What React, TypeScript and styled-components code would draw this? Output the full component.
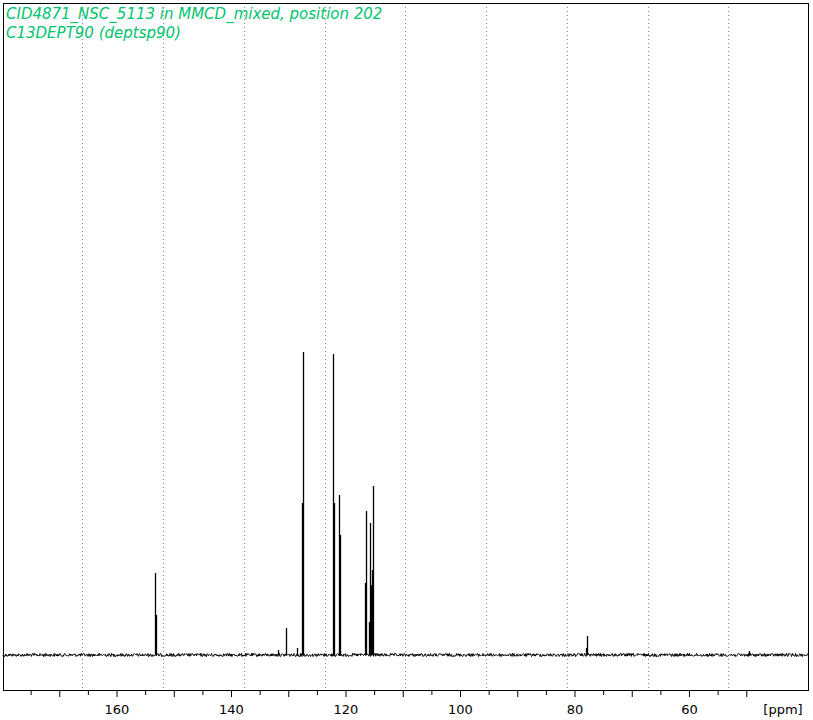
import React from 'react';
import styled, { createGlobalStyle } from 'styled-components';

const Global = createGlobalStyle`
  html, body { margin: 0; background: #fff; }
`;

const W = 813;
const H = 720;
const LEFT = 3;
const RIGHT = 808;
const TOP = 3;
const BOTTOM = 690;
const BASE = 655;

const ppmX = (p: number) => 117 + (160 - p) * 5.725;

const peaks: [number, number][] = [
  [155, 573], [156, 615], [278, 650], [286, 628], [297, 648], [302, 503], [303, 352],
  [333, 354], [334, 503], [339, 495], [340, 535], [365, 583], [366, 511],
  [369, 622], [370, 523], [371, 585], [372, 570], [373, 486], [586, 648], [587, 636],
  [749, 651],
];

function noisePath() {
  let s = 12345;
  const rnd = () => {
    s = (s * 1103515245 + 12345) & 0x7fffffff;
    return s / 0x7fffffff;
  };
  let d = `M${LEFT} ${BASE}`;
  for (let x = LEFT; x <= RIGHT; x += 0.5) {
    d += ` L${x} ${(BASE + (rnd() - 0.5) * 3.2).toFixed(1)}`;
  }
  return d;
}

const Page = styled.div`
  position: relative;
  width: ${W}px;
  height: ${H}px;
  background: #fff;
`;

const Title = styled.div`
  position: absolute;
  left: 6px;
  top: 5px;
  font-family: "DejaVu Sans", sans-serif;
  font-style: italic;
  font-size: 15px;
  line-height: 19px;
  color: #00c46e;
`;

const ticks: number[] = [];
for (let p = 175; p >= 50; p -= 5) ticks.push(p);
const labels = [160, 140, 120, 100, 80, 60];
const grid = [82, 163, 244, 325, 405, 486, 567, 648, 728];

export default function App() {
  return (
    <Page>
      <Global />
      <svg width={W} height={H} style={{ position: 'absolute', left: 0, top: 0 }}>
        {grid.map((x) => (
          <line key={x} x1={x + 0.5} x2={x + 0.5} y1={TOP} y2={BOTTOM} stroke="#888" strokeDasharray="1 3" />
        ))}
        <path d={noisePath()} stroke="#000" strokeWidth={1} fill="none" />
        {peaks.map(([x, y], i) => (
          <line key={i} x1={x + 0.5} x2={x + 0.5} y1={BASE} y2={y} stroke="#000" strokeWidth={1.3} />
        ))}
        <rect x={LEFT + 0.5} y={TOP + 0.5} width={RIGHT - LEFT} height={BOTTOM - TOP} fill="none" stroke="#000" />
        {ticks.map((p) => {
          const x = ppmX(p);
          if (x < LEFT || x > RIGHT) return null;
          return <line key={p} x1={x} x2={x} y1={BOTTOM} y2={BOTTOM + (p % 10 === 0 ? 7 : 5)} stroke="#000" />;
        })}
        {labels.map((p) => (
          <text key={p} x={ppmX(p)} y={714} textAnchor="middle" fontFamily="DejaVu Sans, sans-serif" fontSize={13} fill="#000">
            {p}
          </text>
        ))}
        <text x={783} y={714} textAnchor="middle" fontFamily="DejaVu Sans, sans-serif" fontSize={13} fill="#000">
          [ppm]
        </text>
      </svg>
      <Title>
        CID4871_NSC_5113 in MMCD_mixed, position 202
        <br />
        C13DEPT90 (deptsp90)
      </Title>
    </Page>
  );
}
